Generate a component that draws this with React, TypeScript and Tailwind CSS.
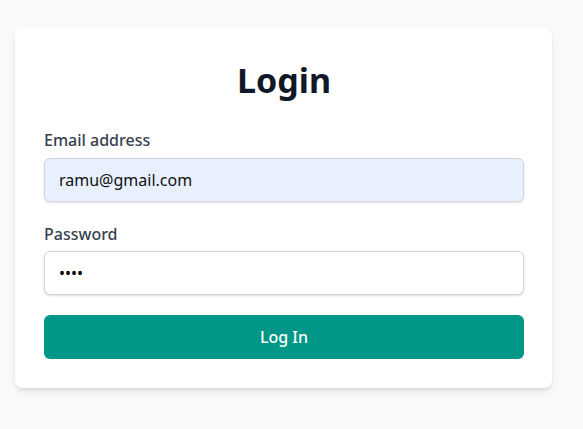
export default function App() {
  return (
    <div
      className="min-h-screen bg-[#f8f9fb] pl-[15px] pr-[31px] pt-[28px]"
      style={{ fontFamily: '"Noto Sans", "Open Sans", sans-serif' }}
    >
      <div className="w-[537px] rounded-lg bg-white pl-[29px] pr-[28px] pt-[32px] pb-[29px] shadow-md">
        <h1 className="text-center text-[34px] font-bold leading-[40px] text-[#111827]">Login</h1>

        <form className="mt-[28px]">
          <label className="block text-base font-medium leading-6 text-[#374151]">Email address</label>
          <input
            type="email"
            defaultValue="ramu@gmail.com"
            className="mt-[6px] block h-[44px] w-full rounded-md border border-[#d1d5db] bg-[#e8f0fe] px-[14px] text-base text-[#111] shadow-sm outline-none"
          />

          <label className="mt-[20px] block text-base font-medium leading-6 text-[#374151]">Password</label>
          <input
            type="password"
            defaultValue="ramu"
            className="mt-[5px] block h-[44px] w-full rounded-md border border-[#d1d5db] bg-white px-[14px] text-base text-black shadow-sm outline-none"
          />

          <button
            type="button"
            className="mt-[20px] h-[44px] w-full rounded-md bg-[#009688] text-base font-medium text-white"
          >
            Log In
          </button>
        </form>
      </div>
    </div>
  )
}
